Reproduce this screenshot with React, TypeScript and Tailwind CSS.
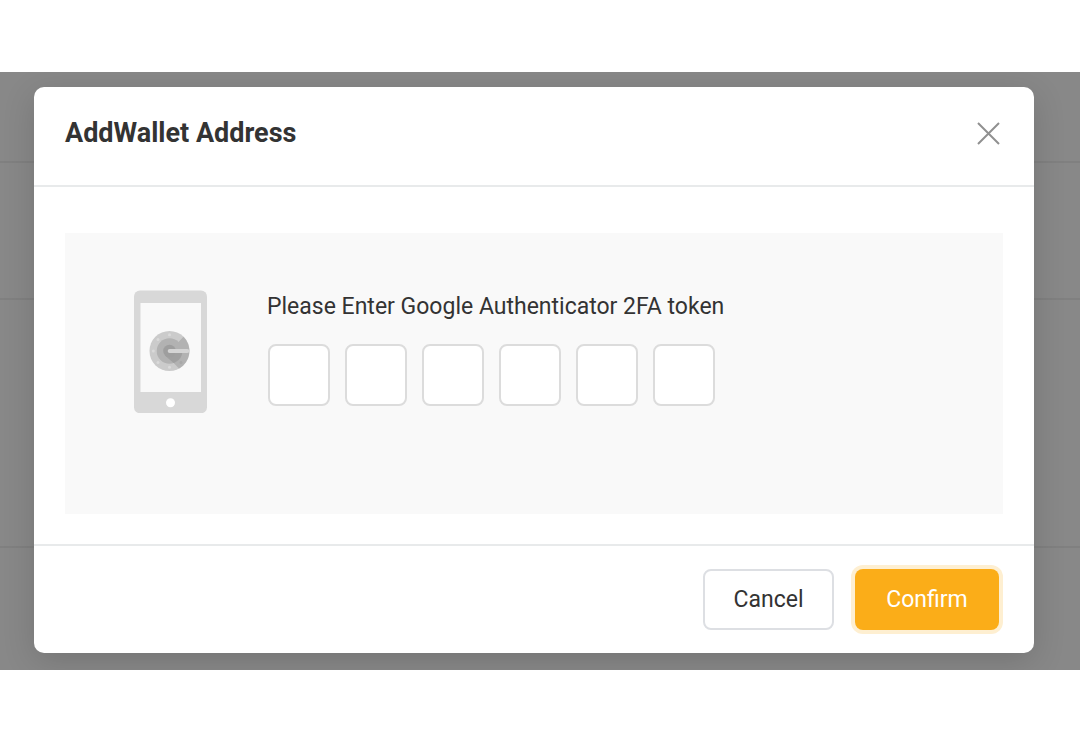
import { useState } from "react";

function PhoneIcon() {
  return (
    <svg className="h-[123px] w-[73px] shrink-0" viewBox="0 0 73 123" aria-hidden="true">
      <rect y="0.4" width="73" height="122.8" rx="6" fill="#d8d8d8" />
      <rect x="6.5" y="13" width="60.5" height="89" fill="#f9f9f9" />
      <circle cx="36.5" cy="112.8" r="4.5" fill="#fff" />
      <circle cx="35.5" cy="61" r="20" fill="#cbcbcb" />
      <path d="M44.5 52 L49.5 46.8 A20 20 0 0 1 45 78.5 L31 64 L35.5 60 Z" fill="#b2b2b2" />
      <circle cx="35.5" cy="61" r="12.8" fill="#b2b2b2" />
      <path d="M43 61 H48.3 A12.8 12.8 0 0 1 41 72.5 L39.5 73 L31 65.5 L35.5 61 Z" fill="#a0a0a0" />
      <circle cx="35.5" cy="61" r="6.3" fill="#9e9e9e" />
      <g fill="#dadada">
        <circle cx="35.5" cy="44.7" r="1.5" />
        <circle cx="24" cy="49.5" r="1.5" />
        <circle cx="19.3" cy="61" r="1.5" />
        <circle cx="24" cy="72.5" r="1.5" />
        <circle cx="35.5" cy="77.3" r="1.5" />
      </g>
      <circle cx="47" cy="72.5" r="1.5" fill="#a8a8a8" />
      <path d="M35.7 61 H53.3" stroke="#d4d4d4" strokeWidth="4" strokeLinecap="round" />
    </svg>
  );
}

const CODE_LENGTH = 6;

export default function App() {
  const [code, setCode] = useState<string[]>(Array(CODE_LENGTH).fill(""));

  const setDigit = (index: number, value: string) =>
    setCode((current) => current.map((digit, i) => (i === index ? value : digit)));

  return (
    <div className="bg-white py-[72px] font-['Roboto',sans-serif] text-[#333]">
      <main className="grid overflow-hidden bg-[#888]">
        <div className="col-start-1 row-start-1 flex flex-col" aria-hidden="true">
          <div className="h-[91px] border-b-2 border-[#808080]" />
          <div className="h-[137px] border-b-2 border-[#808080]" />
          <div className="h-[248px] border-b-2 border-[#808080]" />
        </div>

        <section
          role="dialog"
          aria-labelledby="dialog-title"
          className="relative col-start-1 row-start-1 mt-[15px] mr-[46px] mb-[17px] ml-[34px] rounded-[10px] bg-white shadow-[0_8px_32px_rgba(0,0,0,0.15)]"
        >
          <header className="flex h-[100px] items-center justify-between border-b-2 border-[#e8eaeb] pr-[34px] pb-1.5 pl-[31px]">
            <h1 id="dialog-title" className="text-[27px] leading-9 font-bold">
              AddWallet Address
            </h1>
            <button type="button" aria-label="Close">
              <svg className="size-[23px]" viewBox="0 0 23 23" fill="none" stroke="#909090" strokeWidth="2" aria-hidden="true">
                <path d="M1 1 L22 22 M22 1 L1 22" />
              </svg>
            </button>
          </header>

          <div className="px-[31px] pt-[46px] pb-[30px]">
            <div className="flex min-h-[281px] items-start gap-[60px] bg-[#f9f9f9] pt-[57px] pl-[69px]">
              <PhoneIcon />
              <fieldset>
                <legend className="text-[23px] leading-[34px]">Please Enter Google Authenticator 2FA token</legend>
                <div className="mt-5 flex gap-[15px] pl-px">
                  {code.map((digit, index) => (
                    <input
                      key={index}
                      type="text"
                      inputMode="numeric"
                      maxLength={1}
                      aria-label={`Digit ${index + 1}`}
                      value={digit}
                      onChange={(event) => setDigit(index, event.target.value)}
                      className="size-[62px] rounded-lg border-2 border-[#dcdcdc] bg-white text-center text-[23px]"
                    />
                  ))}
                </div>
              </fieldset>
            </div>
          </div>

          <footer className="flex h-[109px] items-center justify-end gap-[21px] border-t-2 border-[#e8eaeb] pr-[35px]">
            <button type="button" className="h-[61px] w-[131px] rounded-lg border-2 border-[#dddfe3] bg-white text-[23px] leading-[34px]">
              Cancel
            </button>
            <button type="button" className="h-[61px] w-36 rounded-lg bg-[#fbad18] text-[23px] leading-[34px] text-white ring-4 ring-[#feefd1]">
              Confirm
            </button>
          </footer>
        </section>
      </main>
    </div>
  );
}
